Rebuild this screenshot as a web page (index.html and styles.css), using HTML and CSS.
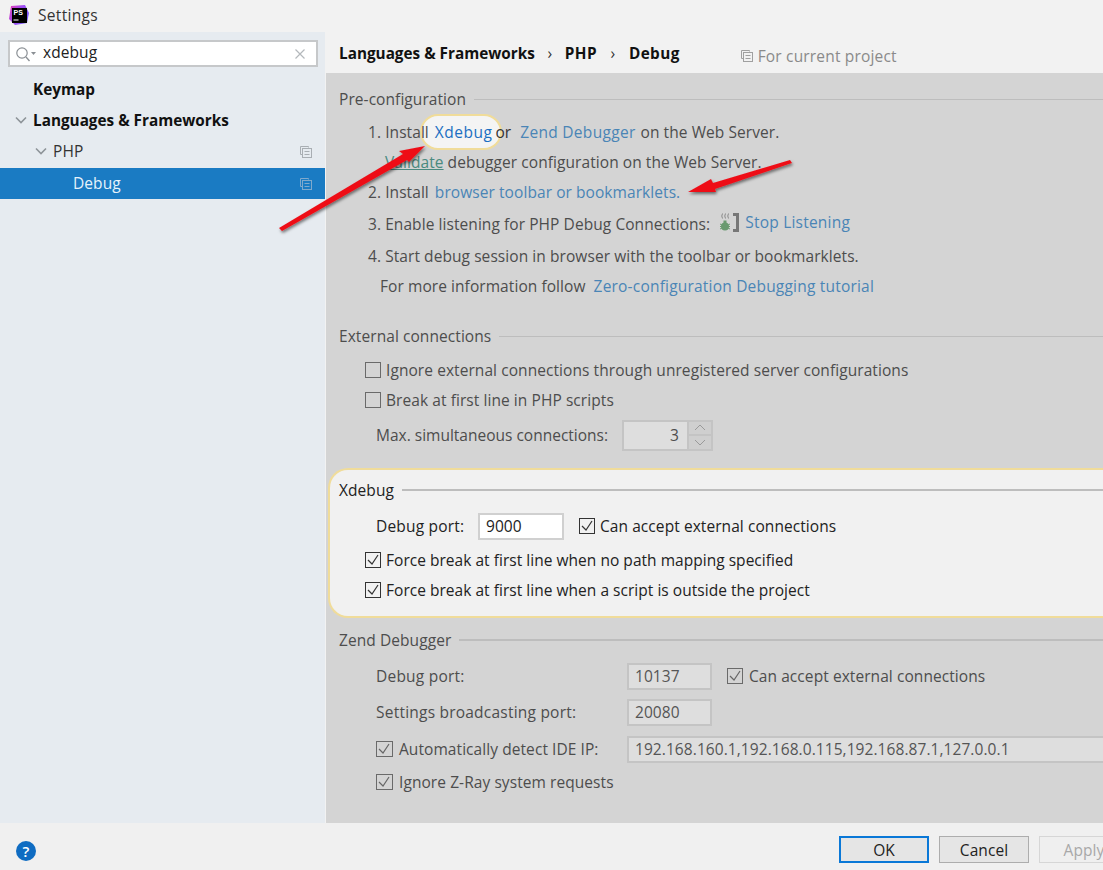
FILE: index.html
```html
<!DOCTYPE html>
<html lang="en">
<head>
<meta charset="utf-8">
<title>Settings</title>
<link rel="stylesheet" href="styles.css">
</head>
<body>
<div class="app">
  <header class="titlebar">
    <svg class="logo" viewBox="0 0 20 20" width="20" height="20">
      <defs><linearGradient id="pslogo" x1="0" y1="0" x2="1" y2="0.6"><stop offset="0" stop-color="#e83fb0"/><stop offset="0.5" stop-color="#a24cf2"/><stop offset="1" stop-color="#7a5af8"/></linearGradient></defs>
      <path d="M2 1 L16 0 L20 8 L18 18 L6 20 L0 14 Z" fill="url(#pslogo)"/>
      <rect x="3" y="3" width="15" height="15" fill="#000"/>
      <text x="4.5" y="10" class="logo-text">PS</text>
      <rect x="4.5" y="14.5" width="5" height="1" fill="#fff"/>
    </svg>
    <span class="window-title">Settings</span>
  </header>
  <div class="main">
    <aside class="sidebar">
      <div class="search">
        <svg class="search-icon" viewBox="0 0 22 16" width="22" height="16"><circle cx="7" cy="7" r="5.2" fill="none" stroke="#8a8f94" stroke-width="1.2"/><path d="M11 11 L14.5 15" stroke="#8a8f94" stroke-width="1.4"/><path d="M16 6 H21 L18.5 9 Z" fill="#8a8f94"/></svg>
        <span class="search-text">xdebug</span>
        <svg class="search-clear" viewBox="0 0 10 10" width="10" height="10"><path d="M0.5 0.5 L9.5 9.5 M9.5 0.5 L0.5 9.5" stroke="#b4b8bc" stroke-width="1.2"/></svg>
      </div>
      <nav class="tree">
        <div class="node bold lvl0">Keymap</div>
        <div class="node bold lvl0"><svg class="chev" viewBox="0 0 12 8" width="12" height="8"><path d="M1 1.5 L6 6.5 L11 1.5" fill="none" stroke="#8e9499" stroke-width="1.6"/></svg>Languages &amp; Frameworks</div>
        <div class="node lvl1"><svg class="chev" viewBox="0 0 12 8" width="12" height="8"><path d="M1 1.5 L6 6.5 L11 1.5" fill="none" stroke="#8e9499" stroke-width="1.6"/></svg>PHP<svg class="copy" viewBox="0 0 12 12" width="12" height="12"><path d="M8.5 1.5 V0.5 H0.5 V8.5 H2.5" fill="none" stroke="#a9aeb3"/><rect x="2.5" y="2.5" width="9" height="9" fill="none" stroke="#a9aeb3"/><path d="M4.5 5.5 H9.5 M4.5 8.5 H9.5" stroke="#a9aeb3"/></svg></div>
        <div class="node lvl2 selected">Debug<svg class="copy" viewBox="0 0 12 12" width="12" height="12"><path d="M8.5 1.5 V0.5 H0.5 V8.5 H2.5" fill="none" stroke="#7fa9cc"/><rect x="2.5" y="2.5" width="9" height="9" fill="none" stroke="#7fa9cc"/><path d="M4.5 5.5 H9.5 M4.5 8.5 H9.5" stroke="#7fa9cc"/></svg></div>
      </nav>
    </aside>
    <section class="content">
      <div class="crumbs">
        <span class="crumb">Languages &amp; Frameworks</span>
        <span class="crumb-sep">›</span>
        <span class="crumb short">PHP</span>
        <span class="crumb-sep wide">›</span>
        <span class="crumb short">Debug</span>
        <span class="project"><svg class="copy-inline" viewBox="0 0 12 12" width="12" height="12"><path d="M8.5 1.5 V0.5 H0.5 V8.5 H2.5" fill="none" stroke="#a0a0a0"/><rect x="2.5" y="2.5" width="9" height="9" fill="none" stroke="#a0a0a0"/><path d="M4.5 5.5 H9.5 M4.5 8.5 H9.5" stroke="#a0a0a0"/></svg>For current project</span>
      </div>
      <div class="panel">
        <div class="row title">Pre-configuration<i class="rule"></i></div>
        <div class="row step m3"><span class="n">1. Install</span><a class="link bright spot">Xdebug</a><span class="or">or</span><a class="link zend">Zend Debugger</a><span class="after-zend">on the Web Server.</span></div>
        <div class="row step ind"><a class="link green">Validate</a><span class="sp">debugger configuration on the Web Server.</span></div>
        <div class="row step"><span class="n">2. Install</span><a class="link tb">browser toolbar or bookmarklets.</a></div>
        <div class="row step m2"><span class="n">3. Enable listening for PHP Debug Connections:</span>
          <svg class="listen" viewBox="0 0 19 19" width="19" height="19"><path d="M2.500 0.500 Q1 3 2.500 5.500 M5.500 0.500 Q4 3 5.500 5.500 M8.500 0.500 Q7 3 8.500 5.500" fill="none" stroke="#8a8a8a" stroke-width="1"/><circle cx="5" cy="13.500" r="4" fill="#6a9a70"/><rect x="3.500" y="7.500" width="3" height="3" fill="#6a9a70"/><path d="M0 11 L10 16 M10 11 L0 16 M0 13.500 H10" stroke="#6a9a70"/><path d="M13 1.500 H17.500 V17.500 H13" fill="none" stroke="#777" stroke-width="3"/></svg>
          <a class="link stop">Stop Listening</a></div>
        <div class="row step m2"><span class="n">4. Start debug session in browser with the toolbar or bookmarklets.</span></div>
        <div class="row more">For more information follow<a class="link tut">Zero-configuration Debugging tutorial</a></div>

        <div class="row title m20">External connections<i class="rule"></i></div>
        <div class="row check-row m4"><span class="cb"></span>Ignore external connections through unregistered server configurations</div>
        <div class="row check-row"><span class="cb"></span>Break at first line in PHP scripts</div>
        <div class="row field-row m5"><span class="lbl-max">Max. simultaneous connections:</span>
          <span class="spinner"><span class="spin-val">3</span><span class="spin-btns"><span class="spin-btn"><svg viewBox="0 0 12 7" width="12" height="7"><path d="M1 6 L6 1 L11 6" fill="none" stroke="#9a9a9a"/></svg></span><span class="spin-btn"><svg viewBox="0 0 12 7" width="12" height="7"><path d="M1 1 L6 6 L11 1" fill="none" stroke="#9a9a9a"/></svg></span></span></span>
        </div>

        <div class="hl">
          <div class="row title">Xdebug<i class="rule strong"></i></div>
          <div class="row field-row m6"><span class="lbl-port">Debug port:</span><span class="input active">9000</span><span class="cb on dark lead"><svg viewBox="0 0 16 16" width="16" height="16"><path d="M3 8 L7 12 L13 3" fill="none" stroke="#333" stroke-width="1.200"/></svg></span>Can accept external connections</div>
          <div class="row check-row force m4"><span class="cb on dark"><svg viewBox="0 0 16 16" width="16" height="16"><path d="M3 8 L7 12 L13 3" fill="none" stroke="#333" stroke-width="1.200"/></svg></span>Force break at first line when no path mapping specified</div>
          <div class="row check-row force"><span class="cb on dark"><svg viewBox="0 0 16 16" width="16" height="16"><path d="M3 8 L7 12 L13 3" fill="none" stroke="#333" stroke-width="1.200"/></svg></span>Force break at first line when a script is outside the project</div>
        </div>

        <div class="row title m20b">Zend Debugger<i class="rule strong"></i></div>
        <div class="row field-row m6"><span class="lbl-zend">Debug port:</span><span class="input dim">10137</span><span class="cb on lead far"><svg viewBox="0 0 16 16" width="16" height="16"><path d="M3 8 L7 12 L13 3" fill="none" stroke="#666" stroke-width="1.200"/></svg></span>Can accept external connections</div>
        <div class="row field-row m6"><span class="lbl-zend">Settings broadcasting port:</span><span class="input dim">20080</span></div>
        <div class="row field-row m7"><span class="cb on narrow"><svg viewBox="0 0 16 16" width="16" height="16"><path d="M3 8 L7 12 L13 3" fill="none" stroke="#666" stroke-width="1.200"/></svg></span><span class="lbl-auto">Automatically detect IDE IP:</span><span class="input dim wide">192.168.160.1,192.168.0.115,192.168.87.1,127.0.0.1</span></div>
        <div class="row field-row m3"><span class="cb on narrow"><svg viewBox="0 0 16 16" width="16" height="16"><path d="M3 8 L7 12 L13 3" fill="none" stroke="#666" stroke-width="1.200"/></svg></span>Ignore Z-Ray system requests</div>
      </div>
    </section>
  </div>
  <footer class="footer">
    <span class="help">?</span>
    <div class="buttons">
      <span class="btn default">OK</span>
      <span class="btn">Cancel</span>
      <span class="btn disabled">Apply</span>
    </div>
  </footer>
  <svg class="arrows" viewBox="0 0 1103 870" width="1103" height="870">
    <defs><filter id="shadow" x="-20%" y="-20%" width="140%" height="150%"><feDropShadow dx="1" dy="2" stdDeviation="1.500" flood-color="#000" flood-opacity="0.500"/></filter></defs>
    <g filter="url(#shadow)" fill="#ee0f18">
      <polygon points="425,146 399,151 403,154 279,228 282,231 407,160 409,162"/>
      <polygon points="688,192 711,179 713,183 790,160 792,163 715,189 716,192"/>
    </g>
  </svg>
</div>
</body>
</html>
```

FILE: styles.css
```css
* { box-sizing: border-box; }
html, body { margin: 0; padding: 0; }
body { font-family: "Open Sans", "Noto Sans", sans-serif; font-size: 15.5px; letter-spacing: 0.07px; color: #222; background: #f2f2f2; overflow: hidden; }
.app { position: relative; width: 1103px; height: 870px; display: flex; flex-direction: column; overflow: hidden; }

.titlebar { height: 32px; flex: none; display: flex; align-items: center; padding-left: 9px; background: #f2f2f2; }
.logo { margin-right: 9px; margin-top: -2px; }
.logo-text { font: bold 7px "Liberation Sans", sans-serif; fill: #fff; letter-spacing: 0; }
.window-title { letter-spacing: 0.3px; color: #333; margin-top: -2px; }

.main { flex: 1; display: flex; min-height: 0; }
.sidebar { width: 325px; flex: none; background: #e6ebf0; padding-top: 8px; }
.search { height: 27px; margin: 0 7px 0 8px; background: #fff; border: 2px solid #c6c8ca; display: flex; align-items: center; padding: 0 11px 0 5px; }
.search-icon { flex: none; }
.search-text { flex: 1; margin-left: 6px; margin-top: -3px; color: #222; }
.search-clear { flex: none; }
.tree { margin-top: 7px; }
.node { height: 31px; display: flex; align-items: center; position: relative; color: #333; padding-bottom: 2px; }
.node.bold { font-weight: 700; color: #111; font-size: 15.3px; letter-spacing: 0; }
.lvl0 { padding-left: 33px; }
.lvl1 { padding-left: 53px; }
.lvl2 { padding-left: 73px; }
.chev { position: absolute; top: 11px; }
.lvl0 .chev { left: 15px; }
.lvl1 .chev { left: 35px; }
.selected { background: #1a7bc3; color: #e6f2fb; margin-top: 1px; }
.copy { position: absolute; right: 13px; top: 10px; }

.content { flex: 1; min-width: 0; margin-left: 1px; display: flex; flex-direction: column; }
.crumbs { height: 41px; flex: none; display: flex; align-items: center; padding-left: 13px; background: #f2f2f2; }
.crumb { font-weight: 700; color: #111; font-size: 15.3px; letter-spacing: 0; }
.crumb.short { letter-spacing: 0.4px; }
.crumb-sep { width: 30px; text-align: center; color: #333; }
.crumb-sep.wide { width: 32px; }
.project { margin-left: 61px; margin-top: 6px; display: flex; align-items: center; color: #8a8a8a; letter-spacing: 0.17px; }
.copy-inline { margin-right: 5px; }

.panel { flex: 1; background: #d4d4d4; padding: 11px 0 0 13px; color: #4d4d4d; isolation: isolate; }
.row { height: 30px; display: flex; align-items: center; white-space: nowrap; }
.title { gap: 8px; }
.rule { flex: 1; height: 1px; background: #bdbdbd; }
.rule.strong { height: 2px; }
.m2 { margin-top: 2px; }
.m3 { margin-top: 3px; }
.m4 { margin-top: 4px; }
.m5 { margin-top: 5px; }
.m6 { margin-top: 6px; }
.m7 { margin-top: 7px; }
.m20 { margin-top: 20px; }
.m20b { margin-top: 7px; }

.step { padding-left: 29px; }
.step.ind { padding-left: 46px; }
.more { padding-left: 41px; }
.link { color: #4a85b6; }
.link.bright { color: #1b6fc2; letter-spacing: 0.5px; }
.link.green { color: #4a8a80; text-decoration: underline; }
.sp { margin-left: 4px; }
.spot { position: relative; margin-left: 6px; }
.spot::before { content: ""; position: absolute; z-index: -1; left: -15px; right: -10px; top: -7px; bottom: -7px; background: #f4f4f4; border: 2px solid #f0dc9a; border-radius: 18px; }
.or { margin-left: 3px; color: #333; }
.zend { margin-left: 9px; letter-spacing: 0.3px; }
.after-zend { margin-left: 5px; }
.tb { margin-left: 6px; }
.listen { margin-left: 10px; margin-top: -3px; flex: none; }
.stop { margin-left: 6px; margin-top: -4px; letter-spacing: 0.22px; }
.tut { margin-left: 8px; letter-spacing: 0.2px; }

.check-row { padding-left: 26px; }
.force { letter-spacing: 0.03px; }
.cb { width: 16px; height: 16px; flex: none; display: inline-block; border: 1px solid #6a6a6a; margin-right: 5px; background: transparent; }
.cb svg { display: block; margin: -1px; }
.cb.dark { border-color: #333; }
.field-row { padding-left: 37px; }
.lbl-max { width: 246px; flex: none; letter-spacing: 0; }
.spinner { width: 91px; height: 31px; flex: none; display: flex; border: 2px solid #c4c4c4; background: #dedede; }
.spin-val { flex: 1; text-align: right; padding-right: 8px; line-height: 27px; }
.spin-btns { width: 24px; display: flex; flex-direction: column; gap: 2px; background: #c4c4c4; padding-left: 2px; }
.spin-btn { flex: 1; display: flex; align-items: center; justify-content: center; background: #cfcfcf; }
.spin-btn svg { display: block; }

.hl { margin: 18px -30px 0 -11px; height: 150px; padding: 5px 0 0 11px; background: #f1f1f1; border: 2px solid #f0dc9a; border-right: 0; border-radius: 20px 0 0 20px; color: #222; }
.hl .row { margin-left: -2px; }
.lbl-port { width: 102px; flex: none; letter-spacing: 0.2px; }
.input { display: inline-block; height: 27px; line-height: 23px; padding-left: 6px; border: 2px solid #d0d0d0; background: #fff; flex: none; }
.input.active { width: 86px; }
.lead { margin-left: 15px; }
.lead.far { margin-right: 6px; }
.lbl-zend { width: 251px; flex: none; letter-spacing: 0.22px; }
.input.dim { width: 85px; background: #dedede; border-color: #c4c4c4; color: #555; }
.input.dim.wide { width: 520px; }
.cb.narrow { width: 17px; margin-right: 6px; }
.lbl-auto { width: 228px; flex: none; }

.footer { height: 47px; flex: none; position: relative; display: flex; align-items: flex-start; background: #f0f0f0; }
.help { width: 20px; height: 20px; margin: 18px 0 0 16px; border-radius: 50%; background: #0f6cc2; color: #fff; text-align: center; line-height: 20px; font-size: 15px; font-weight: 600; flex: none; }
.buttons { display: flex; gap: 10px; margin: 13px 0 0 803px; }
.btn { width: 90px; height: 27px; flex: none; display: flex; align-items: center; justify-content: center; border: 1px solid #adadad; background: #e5e5e5; color: #222; }
.btn.default { border: 2px solid #0a78d7; }
.btn.disabled { border-color: #d6d6d6; background: #efefef; color: #a8a8a8; }

.arrows { position: absolute; left: 0; top: 0; pointer-events: none; }
```
